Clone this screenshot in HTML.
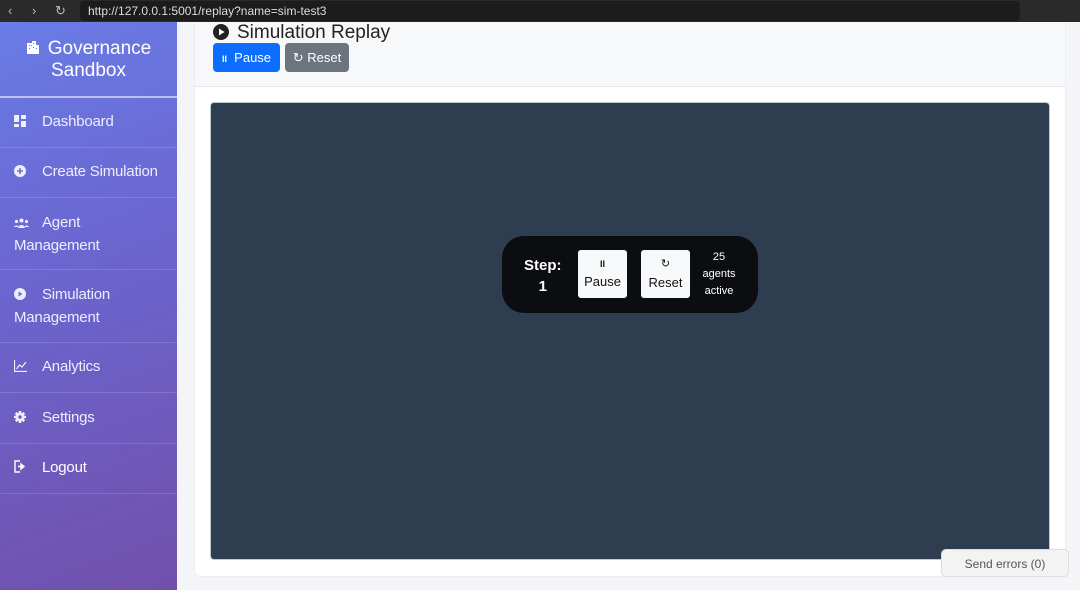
<!DOCTYPE html>
<html><head><style>
*{margin:0;padding:0;box-sizing:border-box}
body{width:1080px;height:590px;overflow:hidden;font-family:"Liberation Sans",sans-serif;background:#f4f5f8;position:relative}
.top{position:absolute;left:0;top:0;width:1080px;height:22px;background:#2a2a2a}
.url{position:absolute;left:80px;top:1px;width:940px;height:20px;background:#1c1c1c;border-radius:4px;color:#ddd;font-size:12px;line-height:20px;padding-left:8px}
.nav{position:absolute;top:3px;color:#bbb;font-size:13px}
.side{position:absolute;left:0;top:22px;width:177px;height:568px;background:linear-gradient(160deg,#6a7ce6 0%,#6b66d0 40%,#7150ac 100%)}
.brand{position:absolute;top:16px;left:0;width:177px;text-align:center;color:#fff;font-size:19px;line-height:22px}
.sep{position:absolute;left:0;width:177px;height:1px;background:rgba(255,255,255,.15)}
.item{position:absolute;left:14px;color:#eef;font-size:15px;line-height:22px;letter-spacing:-0.2px}
.ic{display:inline-block;width:28px;vertical-align:-1px}
.card{position:absolute;left:195px;top:22px;width:870px;height:554px;background:#fff;border-radius:0 0 6px 6px;box-shadow:0 0 2px rgba(0,0,0,.08)}
.hdr{position:absolute;left:0;top:0;width:870px;height:65px;background:#f7f8fa;border-bottom:1px solid #e6e8ee}
.title{position:absolute;left:18px;top:1px;font-size:19px;color:#222;line-height:20px}
.btn{position:absolute;top:21px;height:29px;border-radius:4px;color:#fff;font-size:13px;line-height:29px;text-align:center}
.canvas{position:absolute;left:15px;top:80px;width:840px;height:458px;background:#2e3e50;border-radius:4px;border:1px solid #bcc}
.ctl{position:absolute;width:256px;height:77px;background:#0b0d10;border-radius:22px;color:#fff}
.wb{position:absolute;top:14px;width:49px;height:48px;background:#f8f9fa;border-radius:3px;color:#111;text-align:center;font-size:13px}
.send{position:absolute;left:941px;top:549px;width:128px;height:28px;background:#f3f3f3;border:1px solid #ddd;border-radius:5px;font-size:12px;color:#555;text-align:center;line-height:28px}
</style></head><body>
<div class="top"><span class="nav" style="left:8px">‹</span><span class="nav" style="left:32px">›</span><span class="nav" style="left:55px">↻</span><div class="url">http://127.0.0.1:5001/replay?name=sim-test3</div></div>
<div class="side">
<div class="brand"><svg width="14" height="13" viewBox="0 0 14 13" style="margin-right:8px"><path d="M2 2h4V0h4v4h3v9H1V2z" fill="#fff"/><path d="M3 4h1v1H3zM5 4h1v1H5zM7 2h1v1H7zM3 7h1v1H3zM7 6h1v1H7zM10 7h1v1h-1z" fill="#6a7ce6"/></svg>Governance<br>Sandbox</div>
<div class="sep" style="top:74px;height:2px;background:rgba(255,255,255,.55)"></div>
<div class="item" style="top:89px"><span class="ic"><svg width="12" height="12"><rect x="0" y="0" width="5" height="7" fill="#eef"/><rect x="7" y="0" width="5" height="4" fill="#eef"/><rect x="0" y="9" width="5" height="3" fill="#eef"/><rect x="7" y="6" width="5" height="6" fill="#eef"/></svg></span>Dashboard</div>
<div class="sep" style="top:125px"></div>
<div class="item" style="top:139px"><span class="ic"><svg width="12" height="12"><circle cx="6" cy="6" r="6" fill="#eef"/><path d="M6 3v6M3 6h6" stroke="#6b70d8" stroke-width="1.6"/></svg></span>Create Simulation</div>
<div class="sep" style="top:175px"></div>
<div class="item" style="top:190px"><span class="ic"><svg width="15" height="10"><circle cx="7.5" cy="2.5" r="2" fill="#eef"/><circle cx="2.5" cy="3.5" r="1.6" fill="#eef"/><circle cx="12.5" cy="3.5" r="1.6" fill="#eef"/><path d="M4 10a3.5 3 0 0 1 7 0zM0 9a2.5 2 0 0 1 4 -1v1zM15 9a2.5 2 0 0 0-4-1v1z" fill="#eef"/></svg></span>Agent<br>Management</div>
<div class="sep" style="top:247px"></div>
<div class="item" style="top:262px"><span class="ic"><svg width="12" height="12"><circle cx="6" cy="6" r="6" fill="#eef"/><path d="M4.5 3.5L8.5 6 4.5 8.5z" fill="#6b70d8"/></svg></span>Simulation<br>Management</div>
<div class="sep" style="top:320px"></div>
<div class="item" style="top:334px"><span class="ic"><svg width="13" height="12"><path d="M0.5 0v11.5H13M2.5 9l3-4 2.5 2 4-5" stroke="#eef" stroke-width="1.2" fill="none"/></svg></span>Analytics</div>
<div class="sep" style="top:370px"></div>
<div class="item" style="top:385px"><span class="ic"><svg width="12" height="12" viewBox="0 0 12 12"><circle cx="6" cy="6" r="4.3" fill="#eef"/><g stroke="#eef" stroke-width="2.6"><path d="M6 0v12M0 6h12M1.8 1.8l8.4 8.4M10.2 1.8l-8.4 8.4"/></g><circle cx="6" cy="6" r="1.7" fill="#6d5cc0"/></svg></span>Settings</div>
<div class="sep" style="top:421px"></div>
<div class="item" style="top:435px;color:#fff"><span class="ic"><svg width="12" height="13"><path d="M6 1H1v11h5" stroke="#fff" stroke-width="1.4" fill="none"/><path d="M4 6.5h5M7 4l3 2.5L7 9z" stroke="#fff" stroke-width="1.4" fill="#fff"/></svg></span>Logout</div>
<div class="sep" style="top:471px"></div>
</div>
<div class="card">
<div class="hdr">
<div class="title"><svg width="16" height="16" viewBox="0 0 16 16" style="vertical-align:-2px;margin-right:8px"><circle cx="8" cy="8" r="8" fill="#222"/><path d="M6 4.5L11.5 8 6 11.5z" fill="#fff"/></svg>Simulation Replay</div>
<div class="btn" style="left:18px;width:67px;background:#0d6efd"><b style="font-size:9px">II</b>&nbsp; Pause</div>
<div class="btn" style="left:90px;width:64px;background:#6c757d">↻ Reset</div>
</div>
<div class="canvas"></div>
</div>
<div class="ctl" style="left:502px;top:236px">
<div style="position:absolute;left:22px;top:19px;font-weight:bold;font-size:15px;text-align:center;line-height:21px">Step:<br>1</div>
<div class="wb" style="left:76px"><div style="font-size:9px;margin-top:9px;font-weight:bold">II</div><div style="margin-top:5px">Pause</div></div>
<div class="wb" style="left:139px"><div style="font-size:11px;margin-top:7px">↻</div><div style="margin-top:5px">Reset</div></div>
<div style="position:absolute;left:196px;top:13px;width:42px;text-align:center;font-size:11px;line-height:17px">25<br>agents<br>active</div>
</div>
<div class="send">Send errors (0)</div>
</body></html>
